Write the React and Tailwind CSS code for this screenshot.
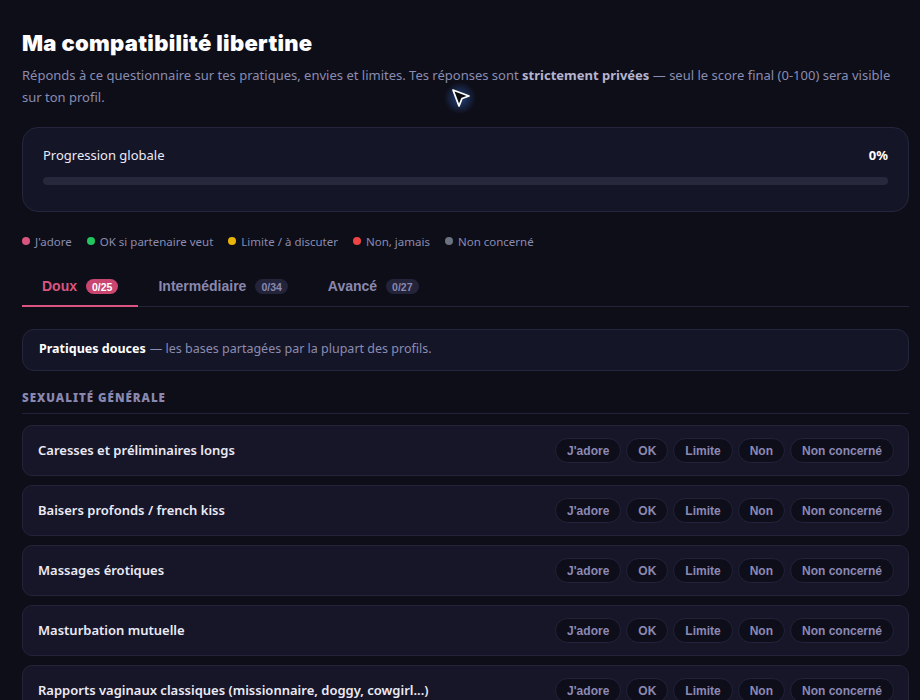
import React from 'react';

const legend = [
  { label: "J'adore", color: 'bg-[#d9557f]' },
  { label: 'OK si partenaire veut', color: 'bg-[#22c55e]' },
  { label: 'Limite / à discuter', color: 'bg-[#eab308]' },
  { label: 'Non, jamais', color: 'bg-[#ef4444]' },
  { label: 'Non concerné', color: 'bg-[#6b7280]' },
];

const tabs = [
  { label: 'Doux', count: '0/25', active: true },
  { label: 'Intermédiaire', count: '0/34' },
  { label: 'Avancé', count: '0/27' },
];

const questions = [
  'Caresses et préliminaires longs',
  'Baisers profonds / french kiss',
  'Massages érotiques',
  'Masturbation mutuelle',
  'Rapports vaginaux classiques (missionnaire, doggy, cowgirl...)',
];

const choices = ["J'adore", 'OK', 'Limite', 'Non', 'Non concerné'];

function Row({ label }) {
  return (
    <div className="flex items-center justify-between h-[51px] pl-[15px] pr-[14px] rounded-[10px] bg-[#161628] border border-[#23233a]">
      <span className="text-[13px] font-semibold text-[#eceaf6]">{label}</span>
      <div className="flex gap-[5px]">
        {choices.map(c => (
          <button
            key={c}
            className="h-[25px] px-[11px] rounded-full bg-[#0e0e1a] border border-[#22223a] text-[12px] font-bold text-[#8c89b3] font-['Liberation_Sans',sans-serif]"
          >
            {c}
          </button>
        ))}
      </div>
    </div>
  );
}

export default function App() {
  return (
    <div className="relative min-h-[700px] bg-[#0e0e19] pl-[22px] pr-[11px] pt-[28px] font-['Noto_Sans',sans-serif] overflow-hidden">
      <h1 className="text-[22px] font-black text-white font-['Inter',sans-serif] leading-[30px] tracking-[0.3px]">
        Ma compatibilité libertine
      </h1>
      <p className="mt-[6px] text-[13px] leading-[22px] text-[#8a8cb0]">
        Réponds à ce questionnaire sur tes pratiques, envies et limites. Tes réponses sont{' '}
        <strong className="font-bold text-[#b5b5d0]">strictement privées</strong> — seul le score final (0-100) sera visible sur ton profil.
      </p>

      <div className="mt-[19px] rounded-[16px] bg-[#151528] border border-[#25253d] px-[20px] pt-[18px] pb-[26px]">
        <div className="flex justify-between items-center">
          <span className="text-[13px] text-[#eceaf6]">Progression globale</span>
          <span className="text-[13px] font-bold text-white">0%</span>
        </div>
        <div className="mt-[11px] h-[8px] rounded-full bg-[#28283d]" />
      </div>

      <div className="mt-[21px] flex gap-[15px] text-[11.5px] text-[#8a8cb0]">
        {legend.map(l => (
          <span key={l.label} className="flex items-center gap-[5px]">
            <span className={`w-[8px] h-[8px] rounded-full ${l.color}`} />
            {l.label}
          </span>
        ))}
      </div>

      <div className="mt-[19px] flex border-b border-[#25253a] font-['Liberation_Sans',sans-serif]">
        {tabs.map(t => (
          <div
            key={t.label}
            className={`flex items-center gap-[9px] h-[38px] px-[20px] -mb-px border-b-2 ${t.active ? 'border-[#d9557f]' : 'border-transparent'}`}
          >
            <span className={`text-[14px] font-bold ${t.active ? 'text-[#d9557f]' : 'text-[#8a88ae]'}`}>{t.label}</span>
            <span
              className={`text-[10.5px] font-bold leading-none px-[6px] py-[2px] h-[15px] flex items-center rounded-full ${t.active ? 'bg-[#c8466f] text-white' : 'bg-[#23233a] text-[#8a88ae]'}`}
            >
              {t.count}
            </span>
          </div>
        ))}
      </div>

      <div className="mt-[22px] rounded-[12px] bg-[#151528] border border-[#25253d] px-[16px] h-[42px] flex items-center text-[12.5px] text-[#8a8cb0]">
        <span className="font-bold text-white mr-[4px]">Pratiques douces</span> — les bases partagées par la plupart des profils.
      </div>

      <div className="mt-[18px] pb-[7px] border-b border-[#22223a] text-[11.5px] font-black tracking-[1px] text-[#8a88ae]">
        SEXUALITÉ GÉNÉRALE
      </div>

      <div className="mt-[11px] flex flex-col gap-[9px]">
        {questions.map(q => (
          <Row key={q} label={q} />
        ))}
      </div>

      <svg className="absolute left-[444px] top-[82px]" width="34" height="34" viewBox="0 0 34 34">
        <defs>
          <radialGradient id="glow">
            <stop offset="0%" stopColor="#3b82f6" stopOpacity="0.45" />
            <stop offset="100%" stopColor="#3b82f6" stopOpacity="0" />
          </radialGradient>
        </defs>
        <circle cx="16" cy="16" r="16" fill="url(#glow)" />
        <path d="M9 8 L25 14 L18 16.5 L15 24 Z" fill="#0b0b12" stroke="#ffffff" strokeWidth="1.8" strokeLinejoin="round" />
      </svg>
    </div>
  );
}
